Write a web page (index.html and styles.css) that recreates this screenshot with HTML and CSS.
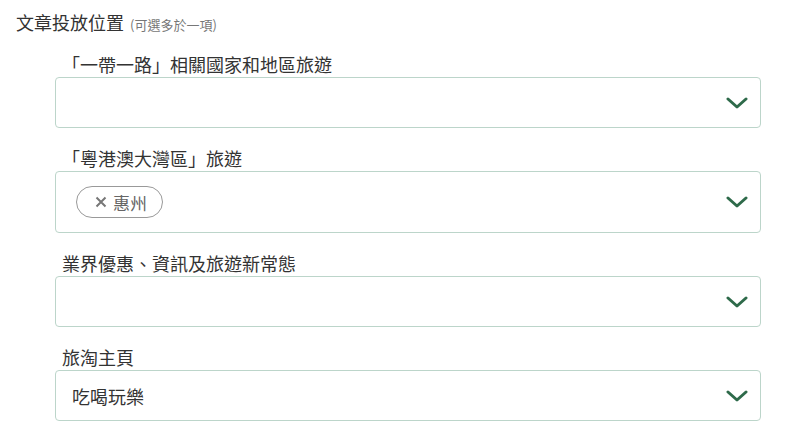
FILE: index.html
```html
<!DOCTYPE html>
<html lang="zh-Hant">
<head>
    <meta charset="UTF-8">
    <meta name="viewport" content="width=device-width, initial-scale=1.0">
    <title>文章投放位置</title>
    <link rel="stylesheet" href="styles.css">
</head>
<body>
    <h2 class="title">文章投放位置 <small>(可選多於一項)</small></h2>

    <div class="fields">
        <div class="field">
            <label>「一帶一路」相關國家和地區旅遊</label>
            <div class="select">
                <div class="value"></div>
                <svg class="arrow" width="22" height="12" viewBox="0 0 22 12"><polyline points="2,2 11,10 20,2"/></svg>
            </div>
        </div>

        <div class="field">
            <label>「粵港澳大灣區」旅遊</label>
            <div class="select multi">
                <div class="value">
                    <span class="chip">
                        <svg class="x" width="12" height="12" viewBox="0 0 12 12"><path d="M1.5 1.5l9 9M10.5 1.5l-9 9"/></svg>惠州
                    </span>
                </div>
                <svg class="arrow" width="22" height="12" viewBox="0 0 22 12"><polyline points="2,2 11,10 20,2"/></svg>
            </div>
        </div>

        <div class="field">
            <label>業界優惠、資訊及旅遊新常態</label>
            <div class="select">
                <div class="value"></div>
                <svg class="arrow" width="22" height="12" viewBox="0 0 22 12"><polyline points="2,2 11,10 20,2"/></svg>
            </div>
        </div>

        <div class="field">
            <label>旅淘主頁</label>
            <div class="select">
                <div class="value">吃喝玩樂</div>
                <svg class="arrow" width="22" height="12" viewBox="0 0 22 12"><polyline points="2,2 11,10 20,2"/></svg>
            </div>
        </div>
    </div>
</body>
</html>
```

FILE: styles.css
```css
body {
    font-family: "Noto Sans CJK TC", "Liberation Sans", sans-serif;
    margin: 0;
    padding: 10px 40px 0 16px;
    background-color: #fff;
    color: #333;
}
.title {
    margin: 0 0 19px;
    font-size: 18px;
    font-weight: normal;
    line-height: 24px;
    height: 24px;
}
.title small {
    font-size: 13px;
    line-height: 1;
    color: #777;
    margin-left: 2px;
}
.fields {
    display: flex;
    flex-direction: column;
    gap: 19px;
    padding-left: 39px;
}
label {
    display: block;
    font-size: 18px;
    line-height: 22px;
    margin: 0 0 2px 7px;
}
.select {
    display: flex;
    align-items: center;
    min-height: 51px;
    box-sizing: border-box;
    border: 1px solid #bcd5ca;
    border-radius: 4px;
    padding: 0 12px 0 16px;
}
.select.multi {
    padding: 14px 12px 14px 20px;
    min-height: 62px;
}
.value {
    flex: 1;
    font-size: 18px;
}
.chip {
    display: inline-flex;
    align-items: center;
    height: 32px;
    box-sizing: border-box;
    border: 1px solid #999;
    border-radius: 16px;
    padding: 0 15px 0 18px;
    font-size: 17px;
    color: #666;
}
.chip .x {
    fill: none;
    stroke: #777;
    stroke-width: 2;
    margin-right: 6px;
}
.arrow {
    fill: none;
    stroke: #2e6a4a;
    stroke-width: 3;
    stroke-linecap: round;
    stroke-linejoin: round;
}
```
